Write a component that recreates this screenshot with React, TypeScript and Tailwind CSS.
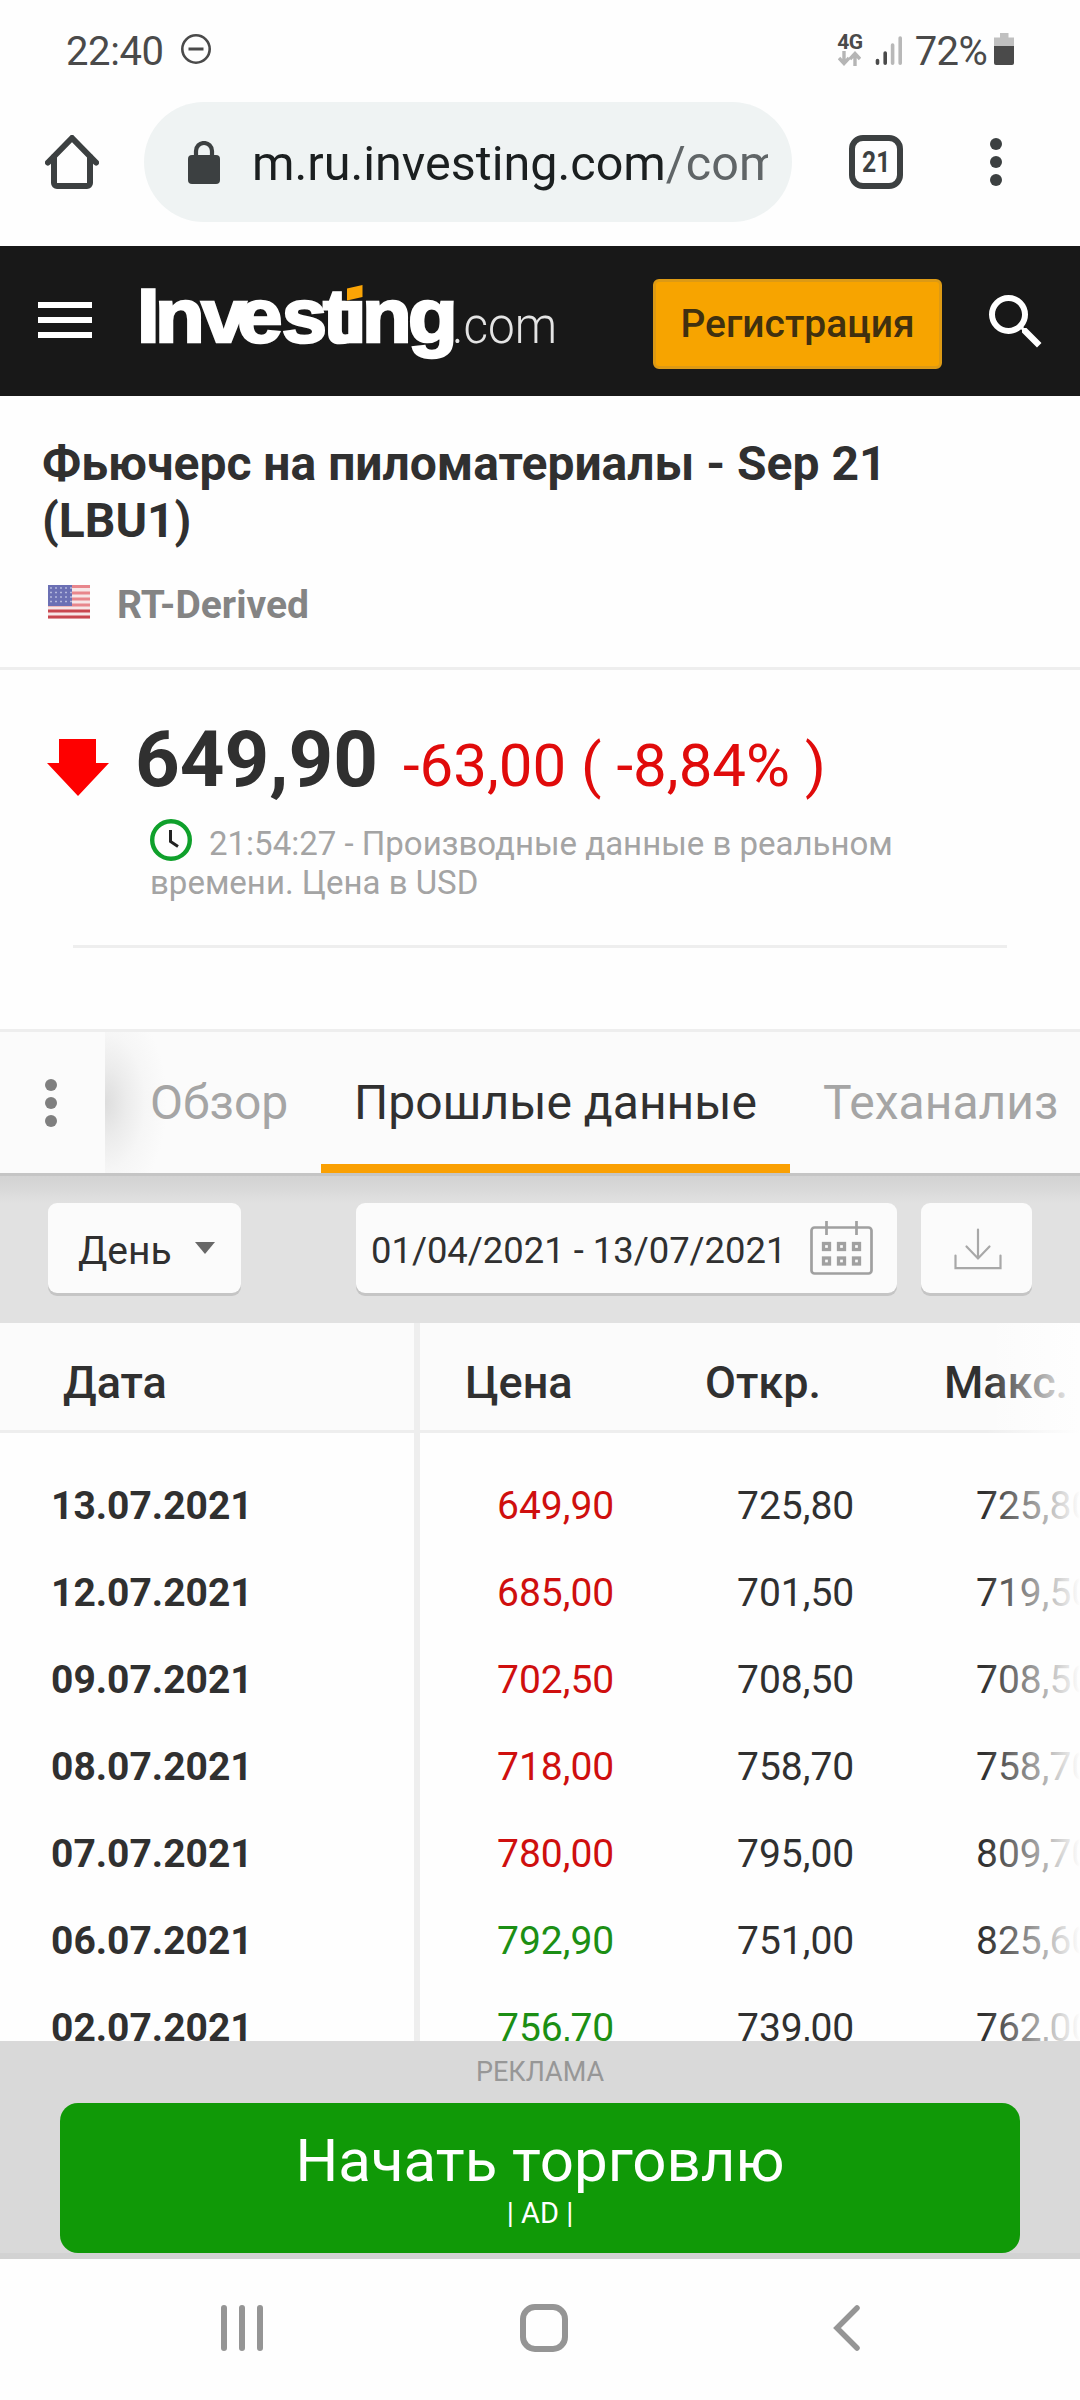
import { MdSearch } from "react-icons/md"

type Row = {
  date: string
  price: string
  open: string
  high: string
  up?: boolean
}

const rows: Row[] = [
  { date: "13.07.2021", price: "649,90", open: "725,80", high: "725,80" },
  { date: "12.07.2021", price: "685,00", open: "701,50", high: "719,50" },
  { date: "09.07.2021", price: "702,50", open: "708,50", high: "708,50" },
  { date: "08.07.2021", price: "718,00", open: "758,70", high: "758,70" },
  { date: "07.07.2021", price: "780,00", open: "795,00", high: "809,70" },
  { date: "06.07.2021", price: "792,90", open: "751,00", high: "825,60", up: true },
  { date: "02.07.2021", price: "756,70", open: "739,00", high: "762,00", up: true },
]

function Dots({ className }: { className?: string }) {
  return (
    <svg className={className} width="12" height="48" viewBox="0 0 12 48" fill="currentColor">
      <circle cx="6" cy="6" r="6" />
      <circle cx="6" cy="24" r="6" />
      <circle cx="6" cy="42" r="6" />
    </svg>
  )
}

function StatusBar() {
  return (
    <div className="flex h-[102px] items-center pl-[66px] pr-[66px] text-[#4a4a4a]">
      <span className="mt-[2px] text-[40px] leading-none tracking-[-0.4px]">22:40</span>
      <svg className="mb-1 ml-[16px]" width="32" height="32" viewBox="0 0 32 32" fill="none" stroke="currentColor">
        <circle cx="16" cy="16" r="13.7" strokeWidth="2.6" />
        <path d="M8.5 16h15" strokeWidth="3" />
      </svg>
      <div className="ml-auto flex items-center">
        <div className="mb-[3px] flex w-6 flex-col items-center">
          <span className="text-[21px] font-bold leading-[18px] tracking-[-0.6px]">4G</span>
          <svg width="23" height="15" viewBox="0 0 23 15" fill="none" stroke="#b5b5b5" strokeWidth="3.4">
            <path d="M6 0v12M1 7l5 5.500 5-5.500M17 15V3M12 8l5-5.500L22 8" />
          </svg>
        </div>
        <svg className="mb-[3px] ml-[13px]" width="28" height="32" viewBox="0 0 28 32" strokeWidth="3.6" strokeLinecap="round">
          <path d="M2.500 26.500v2.700M10.200 19v10.200" stroke="#4a4a4a" />
          <path d="M17.600 11v18.200M25.200 4v25.200" stroke="#b8b8b8" />
        </svg>
        <span className="ml-[12px] mt-[2px] text-[40px] leading-none tracking-[-0.7px]">72%</span>
        <svg className="mb-1 ml-[7px]" width="20" height="32" viewBox="0 0 20 32">
          <path d="M6 0h8.500v4.500H20V14H0V4.500h6z" fill="#c0c0c0" />
          <path d="M0 13h20v17a2 2 0 0 1-2 2H2a2 2 0 0 1-2-2z" fill="#4a4a4a" />
        </svg>
      </div>
    </div>
  )
}

function AddressBar() {
  return (
    <div className="mb-6 flex h-[120px] items-center pl-[45px] text-[#3c4041]">
      <svg width="54" height="54" viewBox="0 0 54 54" fill="none" stroke="currentColor" strokeWidth="6" strokeLinejoin="round" strokeLinecap="round">
        <path d="M3 27.500L27 3l24 24.500" />
        <path d="M9 22v26a3 3 0 0 0 3 3h30a3 3 0 0 0 3-3V22" />
      </svg>
      <div className="ml-[45px] flex h-[120px] w-[648px] items-center rounded-full bg-[#eff3f3] pl-[44px]">
        <svg width="32" height="43" viewBox="0 0 32 43">
          <path d="M8 17V10a8 8 0 0 1 16 0v7" fill="none" stroke="currentColor" strokeWidth="4.200" />
          <rect y="14" width="32" height="29" rx="4" fill="currentColor" />
        </svg>
        <div className="ml-[32px] mt-[4px] w-[516px] overflow-hidden whitespace-nowrap text-[48.500px] leading-[64px] text-[#1b1f20]">
          <span>m.ru.investing.com</span>
          <span className="text-[#606567]">/com</span>
        </div>
      </div>
      <div className="ml-[57px] flex h-[54px] w-[54px] items-center justify-center rounded-[14px] border-[6px] border-current">
        <span className="scale-x-[0.82] text-[30px] font-bold leading-none">21</span>
      </div>
      <Dots className="ml-[87px]" />
    </div>
  )
}

function Logo() {
  return (
    <svg className="ml-[47px]" width="420" height="90" viewBox="0 0 420 90">
      <text transform="scale(1.07 1)" x="-1.9 15 58.3 91.8 133.5 172 191.5 208.5 251.5" y="65.500" fill="#fff" stroke="#fff" strokeWidth="2.600" fontFamily="Liberation Sans, Arial, sans-serif" fontWeight="700" fontSize="76">
        Investing
      </text>
      {/* orange dot over the second "i" */}
      <path d="M206.500 3h19v21.500h-19z" fill="#181818" />
      <path d="M208 12.500l15.500-3.500v12L208 24.500z" fill="#faa405" />
      <text x="313" y="66.500" fill="#e4e4e4" fontFamily="Roboto, sans-serif" fontWeight="300" fontSize="52" textLength="105" lengthAdjust="spacingAndGlyphs">
        .com
      </text>
    </svg>
  )
}

function SiteHeader() {
  return (
    <header className="flex h-[150px] items-center bg-[#181818] pl-[38px]">
      <div className="flex w-[54px] flex-col gap-[9px] pb-[2px]">
        <div className="h-[6px] bg-white" />
        <div className="h-[6px] bg-white" />
        <div className="h-[6px] bg-white" />
      </div>
      <Logo />
      <button className="ml-[94px] mt-[6px] h-[90px] w-[289px] rounded-[6px] border-[3px] border-[#dd9a14] bg-[#f7a400] text-[39px] font-medium leading-none text-[#40300f]">
        Регистрация
      </button>
      <MdSearch className="ml-[38px] mt-[2px] text-white" size={72} />
    </header>
  )
}

function Flag() {
  return (
    <svg width="42" height="34" viewBox="0 0 42 34">
      <rect width="42" height="34" fill="#f7e6e7" />
      <path d="M0 1.500h42M0 8h42M0 14h42M0 20h42" stroke="#e8868c" strokeWidth="2.800" />
      <path d="M0 26h42M0 32h42" stroke="#c9474f" strokeWidth="3" />
      <rect width="24" height="21" fill="#6b70b4" />
      <path d="M2 3h22M2 7.500h22M2 12h22M2 16.500h22" stroke="#b4b7dc" strokeWidth="1.600" strokeDasharray="2 3" />
    </svg>
  )
}

function Quote() {
  return (
    <>
      <section className="border-b-[3px] border-[#eeeeee] px-[42px] pb-[42px] pt-[39px]">
        <h1 className="text-[48px] font-bold leading-[57px] text-[#303030]">
          Фьючерс на пиломатериалы - Sep 21
          <br />
          (LBU1)
        </h1>
        <div className="mt-[34px] flex h-[42px] items-center pl-[6px]">
          <div className="mb-[5px]">
            <Flag />
          </div>
          <span className="ml-[27px] mt-[2px] text-[39px] font-bold leading-none text-[#848484]">RT-Derived</span>
        </div>
      </section>

      <section className="h-[359px] pt-[45px]">
        <div className="flex h-[90px] pl-[47px]">
          <svg className="mt-[24px]" width="62" height="57" viewBox="0 0 62 57">
            <path d="M12 0h37v24h13L31 57 0 24h12z" fill="#fe0000" />
          </svg>
          <p className="ml-[26px] whitespace-nowrap leading-[90px]">
            <span className="text-[78px] font-bold text-[#303030]">649,90</span>
            <span className="ml-[25px] text-[60px] leading-none text-[#e00b0b]">-63,00 ( -8,84% )</span>
          </p>
        </div>
        <div className="mt-[19px] pl-[150px] text-[33px] leading-[39px] text-[#a4a4a4]">
          <div className="flex h-[39px] items-center">
            <svg className="mb-[7px]" width="42" height="42" viewBox="0 0 42 42" fill="none">
              <circle cx="21" cy="21" r="18.800" stroke="#0fa02b" strokeWidth="4.400" />
              <path d="M20.500 11v11.500l7.500 5" stroke="#222" strokeWidth="3" />
            </svg>
            <span className="ml-[17px]">21:54:27 - Производные данные в реальном</span>
          </div>
          <p>времени. Цена в USD</p>
        </div>
        <div className="mx-[73px] mt-[43px] h-[3px] bg-[#eeeeee]" />
      </section>
    </>
  )
}

function Tabs() {
  return (
    <nav className="flex h-[147px] border-b-[3px] border-t-[3px] border-b-[#c5c5c5] border-t-[#eeeeee] bg-[#fbfbfb] text-[48px] leading-[141px]">
      <div className="flex w-[105px] items-center pl-[45px] text-[#7f7f7f]">
        <Dots />
      </div>
      <div className="w-[216px] bg-[radial-gradient(ellipse_62px_105px_at_0_50%,#dddddd,#ececec_35%,#f6f6f6_65%,#fbfbfb)] pl-[45px] text-[#a5a5a5]">Обзор</div>
      <div className="h-[141px] w-[469px] border-b-[9px] border-[#faa003] text-center text-[#303030]">Прошлые данные</div>
      <div className="pl-[33px] text-[#a5a5a5]">Теханализ</div>
    </nav>
  )
}

function Filters() {
  return (
    <div className="flex h-[147px] bg-[#e1e1e1] bg-[linear-gradient(#d3d3d3,#d6d6d6_8px,#e1e1e1_27px)] pl-[48px] pt-[27px] text-[#303030]">
      <div className="flex h-[90px] w-[193px] items-center rounded-[9px] bg-[#fbfbfb] pl-[30px] text-[39px] shadow-[0_3px_0_#c5c5c5]">
        <span className="pt-[7px] leading-none">День</span>
        <svg className="ml-[23px]" width="20" height="12" viewBox="0 0 20 12">
          <path d="M0 0h20L10 12z" fill="#686868" />
        </svg>
      </div>
      <div className="ml-[115px] flex h-[90px] w-[541px] items-center rounded-[9px] bg-[#fbfbfb] pl-[15px] shadow-[0_3px_0_#c5c5c5]">
        <span className="w-[439px] whitespace-nowrap pt-[6px] text-[36.400px] leading-none">01/04/2021 - 13/07/2021</span>
        <svg width="63" height="54" viewBox="0 0 63 54" fill="none" stroke="#a0a0a0">
          <rect x="1.500" y="6.500" width="60" height="46" rx="3" strokeWidth="2.700" />
          <path d="M16.500 0v14M46.500 0v14" strokeWidth="2.700" />
          <g strokeWidth="3.300">
            <rect x="13.500" y="22.500" width="6" height="6" />
            <rect x="28.500" y="22.500" width="6" height="6" />
            <rect x="43.500" y="22.500" width="6" height="6" />
            <rect x="13.500" y="37" width="6" height="6" />
            <rect x="28.500" y="37" width="6" height="6" />
            <rect x="43.500" y="37" width="6" height="6" />
          </g>
        </svg>
      </div>
      <div className="ml-[24px] flex h-[90px] w-[111px] items-center justify-center rounded-[9px] bg-[#fbfbfb] shadow-[0_3px_0_#c5c5c5]">
        <svg className="ml-[2px] mt-[2px]" width="48" height="42" viewBox="0 0 48 42" fill="none" stroke="#a8a8a8" strokeWidth="2.200" strokeLinecap="round">
          <path d="M24 1.500v29M12.500 18.500L24 30.500l11.500-12" />
          <path d="M1.500 27.500v12.700h45V27.500" />
        </svg>
      </div>
    </div>
  )
}

function History() {
  return (
    <div className="relative flex h-[718px] overflow-hidden text-[#303030]">
      <div className="w-[420px] shrink-0 border-r-[6px] border-[#eeeeee]">
        <div className="h-[110px] border-b-[3px] border-[#eeeeee] bg-[#fbfbfb] pl-[63px] pt-[12px] text-[45px] font-medium leading-[95px]">Дата</div>
        <div className="pt-[30px]">
          {rows.map((row) => (
            <div key={row.date} className="h-[87px] pl-[51px] text-[39px] font-bold leading-[87px]">{row.date}</div>
          ))}
        </div>
      </div>
      <div className="w-[660px] shrink-0">
        <div className="grid h-[110px] grid-cols-[240px_239px_180px] border-b-[3px] border-[#eeeeee] bg-[#fbfbfb] pl-[45px] pt-[12px] text-[45px] font-medium leading-[95px]">
          <span>Цена</span>
          <span>Откр.</span>
          <span>Макс.</span>
        </div>
        <div className="pt-[30px]">
          {rows.map((row) => (
            <div key={row.date} className="grid h-[87px] grid-cols-[240px_239px_180px] pl-[77px] text-[39px] leading-[87px]">
              <span className={row.up ? "text-[#1c8f14]" : "text-[#cf0f0e]"}>{row.price}</span>
              <span>{row.open}</span>
              <span>{row.high}</span>
            </div>
          ))}
        </div>
      </div>
      <div className="absolute right-0 top-0 h-full w-[95px] bg-linear-to-r from-[#fefefe]/0 to-[#fefefe]" />
    </div>
  )
}

function Ad() {
  return (
    <div className="h-[218px] border-b-[6px] border-[#d2d2d2] bg-[#d9d9d9] px-[60px] text-center">
      <p className="text-[27px] leading-[62px] text-[#979797]">РЕКЛАМА</p>
      <div className="h-[150px] rounded-[18px] bg-[#109907] pt-[22px] text-white">
        <p className="text-[60px] leading-[71px]">Начать торговлю</p>
        <p className="text-[29px] leading-[35px]">| AD |</p>
      </div>
    </div>
  )
}

function NavBar() {
  return (
    <div className="flex h-[141px] pl-[220px] pt-[45px] text-[#959595]">
      <svg width="44" height="48" viewBox="0 0 44 48" stroke="currentColor" strokeWidth="6" strokeLinecap="round">
        <path d="M4 4v40M22 4v40M40 4v40" />
      </svg>
      <div className="ml-[256px] h-[48px] w-[48px] rounded-[15px] border-[6px] border-current" />
      <svg className="ml-[265px]" width="28" height="48" viewBox="0 0 28 48" fill="none" stroke="currentColor" strokeWidth="5.500" strokeLinecap="round">
        <path d="M24 4L4 24l20 20" />
      </svg>
    </div>
  )
}

export default function App() {
  return (
    <div className="h-[2400px] w-[1080px] overflow-hidden bg-[#fefefe] font-[Roboto,sans-serif]">
      <StatusBar />
      <AddressBar />
      <SiteHeader />
      <Quote />
      <Tabs />
      <Filters />
      <History />
      <Ad />
      <NavBar />
    </div>
  )
}
